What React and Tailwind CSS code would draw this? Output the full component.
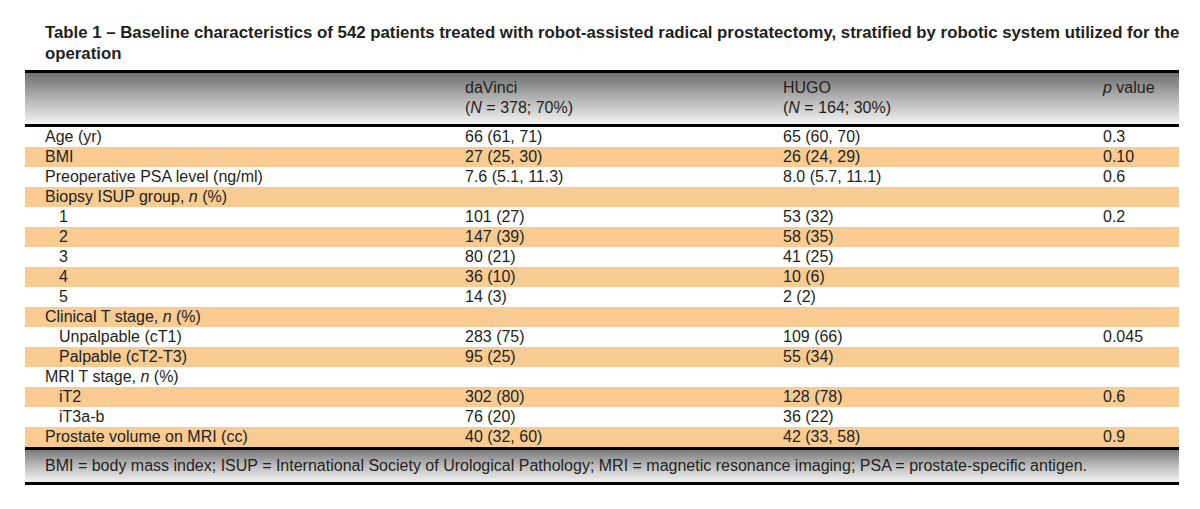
const rows = [
    { label: 'Age (yr)', a: '66 (61, 71)', b: '65 (60, 70)', p: '0.3' },
    { label: 'BMI', a: '27 (25, 30)', b: '26 (24, 29)', p: '0.10' },
    { label: 'Preoperative PSA level (ng/ml)', a: '7.6 (5.1, 11.3)', b: '8.0 (5.7, 11.1)', p: '0.6' },
    { label: 'Biopsy ISUP group, ', n: true },
    { label: '1', sub: true, a: '101 (27)', b: '53 (32)', p: '0.2' },
    { label: '2', sub: true, a: '147 (39)', b: '58 (35)' },
    { label: '3', sub: true, a: '80 (21)', b: '41 (25)' },
    { label: '4', sub: true, a: '36 (10)', b: '10 (6)' },
    { label: '5', sub: true, a: '14 (3)', b: '2 (2)' },
    { label: 'Clinical T stage, ', n: true },
    { label: 'Unpalpable (cT1)', sub: true, a: '283 (75)', b: '109 (66)', p: '0.045' },
    { label: 'Palpable (cT2-T3)', sub: true, a: '95 (25)', b: '55 (34)' },
    { label: 'MRI T stage, ', n: true },
    { label: 'iT2', sub: true, a: '302 (80)', b: '128 (78)', p: '0.6' },
    { label: 'iT3a-b', sub: true, a: '76 (20)', b: '36 (22)' },
    { label: 'Prostate volume on MRI (cc)', a: '40 (32, 60)', b: '42 (33, 58)', p: '0.9' },
];

const App = () => {
    return (
        <div className="w-[1200px] h-[509px] bg-white px-[25px] pt-[22px] text-[#231f20] font-['Liberation_Sans',sans-serif]">
            <h1 className="ml-[20px] text-[16.8px] leading-[21px] font-bold">
                <span className="whitespace-nowrap">Table 1 – Baseline characteristics of 542 patients treated with robot-assisted radical prostatectomy, stratified by robotic system utilized for the</span>
                <br />
                operation
            </h1>

            <div className="mt-[6px] w-[1154px] text-[16px] leading-[20px]">
                <div className="border-t-[3px] border-b-[3px] border-black h-[57px] bg-gradient-to-b from-[#6f6f6f] via-[#b4b4b4] to-[#f4f4f4] grid grid-cols-[420px_318px_320px_1fr] pl-[20px] pt-[5px]">
                    <div></div>
                    <div>daVinci<br />(<i>N</i> = 378; 70%)</div>
                    <div>HUGO<br />(<i>N</i> = 164; 30%)</div>
                    <div><i>p</i> value</div>
                </div>

                {rows.map((r, i) => (
                    <div
                        key={i}
                        className={`grid grid-cols-[420px_318px_320px_1fr] pl-[20px] h-[20px] items-center ${i % 2 === 1 ? 'bg-[#f8cb92]' : 'bg-white'}`}
                    >
                        <div className={r.sub ? 'pl-[14px]' : ''}>
                            {r.label}
                            {r.n && <><i>n</i> (%)</>}
                        </div>
                        <div>{r.a}</div>
                        <div>{r.b}</div>
                        <div>{r.p}</div>
                    </div>
                ))}

                <div className="border-t-[3px] border-b-[3px] border-black h-[38px] bg-gradient-to-b from-[#7a7a7a] via-[#bdbdbd] to-[#f2f2f2] pl-[20px] flex items-center">
                    BMI = body mass index; ISUP = International Society of Urological Pathology; MRI = magnetic resonance imaging; PSA = prostate-specific antigen.
                </div>
            </div>
        </div>
    );
};

export default App;
